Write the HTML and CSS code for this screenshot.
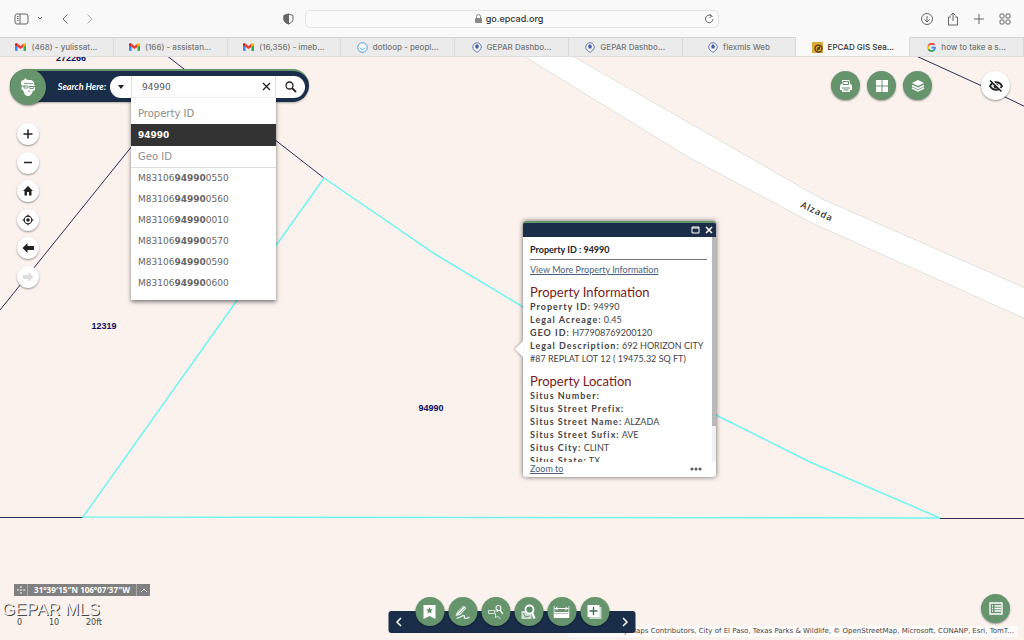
FILE: index.html
```html
<!DOCTYPE html>
<html lang="en">
<head>
    <meta charset="UTF-8">
    <meta name="viewport" content="width=device-width, initial-scale=1.0">
    <title>EPCAD GIS Search</title>
    <link rel="stylesheet" href="styles.css">
</head>
<body>

    <!-- shared icons -->
    <svg class="sprite" aria-hidden="true">
        <symbol id="gmail" viewBox="0 0 22 16">
            <path d="M0 2v12c0 1 1 2 2 2h3V7z" fill="#4285f4"/>
            <path d="M22 2v12c0 1-1 2-2 2h-3V7z" fill="#34a853"/>
            <path d="M5 1v7l6 4 6-4V1l-6 5z" fill="#ea4335"/>
            <path d="M0 3c0-3 3-3 5-2v7L0 4z" fill="#c5221f"/>
            <path d="M22 3c0-3-3-3-5-2v7l5-4z" fill="#fbbc04"/>
        </symbol>
        <symbol id="gepar" viewBox="0 0 20 22">
            <path d="M10 21l-3-3a8.500 8.500 0 1 1 6 0z" fill="#fff" stroke="#4a64ad" stroke-width="1.800"/>
            <path d="M10 4l5 5h-2v4H7V9H5z" fill="#3f5aa8"/>
        </symbol>
    </svg>

    <header class="toolbar">
        <div class="tools tools-left">
            <button class="tool" aria-label="Sidebar"><svg width="15" height="12" viewBox="0 0 15 12"><rect x="1" y="1" width="13" height="10" rx="2"/><path d="M6 1v10M3 3.500h1.500M3 5.500h1.500M3 7.500h1.500"/></svg></button>
            <button class="tool tool-menu" aria-label="Tab groups"><svg width="6" height="5" viewBox="0 0 6 5"><path d="M1 1l2 2 2-2"/></svg></button>
            <button class="tool tool-back" aria-label="Back"><svg width="8" height="12" viewBox="0 0 8 12"><path d="M6.500 1.500L2 6l4.500 4.500"/></svg></button>
            <button class="tool tool-off" aria-label="Forward"><svg width="8" height="12" viewBox="0 0 8 12"><path d="M1.500 1.500L6 6l-4.500 4.500"/></svg></button>
            <button class="tool tool-shield" aria-label="Privacy report"><svg width="11" height="12" viewBox="0 0 11 12"><path d="M5.500 1L10 2.500v4c0 2-2 3.500-4.500 4.500C3 10 1 8.500 1 6.500v-4z"/><path d="M5.500 1v10C3 10 1 8.500 1 6.500v-4z" class="solid"/></svg></button>
        </div>
        <div class="address">
            <span class="address-text"><svg width="7" height="9" viewBox="0 0 7 9"><rect y="4" width="7" height="5" rx="1" fill="#888"/><path d="M1.500 4V2.500a2 2 0 0 1 4 0V4" fill="none" stroke="#888"/></svg>go.epcad.org</span>
            <button class="tool" aria-label="Reload"><svg width="10" height="11" viewBox="0 0 10 11"><path d="M8.500 4A3.800 3.800 0 1 0 9 6M5.500 1l2 2-2 2"/></svg></button>
        </div>
        <div class="tools tools-right">
            <button class="tool" aria-label="Downloads"><svg width="14" height="14" viewBox="0 0 14 14"><circle cx="7" cy="7" r="5.500"/><path d="M7 4v6M4.500 7.500L7 10l2.500-2.500"/></svg></button>
            <button class="tool" aria-label="Share"><svg width="14" height="14" viewBox="0 0 14 14"><path d="M5 5H2.500v8h9V5H9M7 9V1M4.500 3.500L7 1l2.500 2.500"/></svg></button>
            <button class="tool" aria-label="New tab"><svg width="14" height="14" viewBox="0 0 14 14"><path d="M7 2v10M2 7h10"/></svg></button>
            <button class="tool" aria-label="Tab overview"><svg width="14" height="14" viewBox="0 0 14 14"><rect x="2" y="2" width="4" height="4" rx="1"/><rect x="8" y="2" width="4" height="4" rx="1"/><rect x="2" y="8" width="4" height="4" rx="1"/><rect x="8" y="8" width="4" height="4" rx="1"/></svg></button>
        </div>
    </header>

    <nav class="tabs">
        <a class="tab" href="#"><svg width="11" height="8"><use href="#gmail"/></svg>(468) - yulissat...</a>
        <a class="tab" href="#"><svg width="11" height="8"><use href="#gmail"/></svg>(166) - assistan...</a>
        <a class="tab" href="#"><svg width="11" height="8"><use href="#gmail"/></svg>(16,356) - imeb...</a>
        <a class="tab" href="#"><svg width="11" height="11" viewBox="0 0 22 22"><circle cx="11" cy="11" r="9.500" fill="#fff" stroke="#4b9ae0" stroke-width="2"/><path d="M6 11c1 5 9 5 10 0" fill="none" stroke="#4b9ae0" stroke-width="2"/></svg>dotloop - peopl...</a>
        <a class="tab" href="#"><svg width="10" height="11"><use href="#gepar"/></svg>GEPAR Dashbo...</a>
        <a class="tab" href="#"><svg width="10" height="11"><use href="#gepar"/></svg>GEPAR Dashbo...</a>
        <a class="tab" href="#"><svg width="10" height="11"><use href="#gepar"/></svg>flexmls Web</a>
        <a class="tab active" href="#"><svg width="11" height="11" viewBox="0 0 22 22"><path d="M0 0h22v22H0z" fill="#dfa83a"/><circle cx="13" cy="13" r="7" fill="none" stroke="#4c3515" stroke-width="2.500"/><path d="M17 8l-2 7-6 3 2-7z" fill="#4c3515"/></svg>EPCAD GIS Sea...</a>
        <a class="tab" href="#"><svg width="9" height="9" viewBox="0 0 18 18" fill="none" stroke-width="3.500"><path d="M15 4A7 7 0 0 0 3 5.500" stroke="#ea4335"/><path d="M3 5.500a7 7 0 0 0 0 7" stroke="#fbbc04"/><path d="M3 12.500a7 7 0 0 0 10.500 2" stroke="#34a853"/><path d="M13.500 14.500A7 7 0 0 0 16 9H9" stroke="#4285f4"/></svg>how to take a s...</a>
    </nav>

    <main class="map">
        <svg class="parcels" aria-hidden="true">
            <path class="road" d="M522-2L688 100 812 166 1030 264V233L820 141 571-2z"/>
            <path class="boundary" d="M0 253L190 17M166-2L324 121M914-2L982 29 1030 52M0 460.500H83M940 461.500H1030"/>
            <path class="selected" d="M324 121L83 460 940 461 810 405 716 358 523 250 435 197z"/>
            <text class="parcel-id" x="71" y="4">272266</text>
            <text class="parcel-id" x="104" y="272">12319</text>
            <text class="parcel-id" x="431" y="354">94990</text>
            <text class="street" transform="translate(800 150) rotate(25)">Alzada</text>
        </svg>

        <div class="map-top">
            <form class="search">
                <span class="logo"><svg width="18" height="20" viewBox="0 0 18 20"><path d="M3 9C1 6 2 3 5 3L6 1c1 2 4 2 6 2 3 1 4 3 3 5l1 1v4l-2 1c-1 3-3 5-5 5-3 0-4-3-5-6-2 0-2-2-1-4z" fill="#fff"/><path d="M2 9h4M10 9.500h6M5 9v2h4V9zM11 9.500v2h3.500v-2zM5 6.500c3-1 6 1 9 0M9 14l2 .5" fill="none" stroke="#66946d" stroke-width=".9"/></svg></span>
                <label for="search-text">Search Here:</label>
                <div class="search-box">
                    <button type="button" class="search-source" aria-label="Search source"><svg width="6" height="4" viewBox="0 0 6 4"><path d="M0 0h6L3 4z" fill="#222"/></svg></button>
                    <div class="search-field">
                        <input id="search-text" type="text" value="94990">
                        <button type="button" class="clear" aria-label="Clear"><svg width="9" height="9" viewBox="0 0 9 9"><path d="M1 1l7 7M8 1L1 8" stroke="#222" stroke-width="1.300"/></svg></button>
                        <div class="suggestions">
                            <h4>Property ID</h4>
                            <ul>
                                <li><button type="button" class="current"><b>94990</b></button></li>
                            </ul>
                            <h4 class="ruled">Geo ID</h4>
                            <ul>
                                <li><button type="button">M83106<b>94990</b>0550</button></li>
                                <li><button type="button">M83106<b>94990</b>0560</button></li>
                                <li><button type="button">M83106<b>94990</b>0010</button></li>
                                <li><button type="button">M83106<b>94990</b>0570</button></li>
                                <li><button type="button">M83106<b>94990</b>0590</button></li>
                                <li><button type="button">M83106<b>94990</b>0600</button></li>
                            </ul>
                        </div>
                    </div>
                    <button class="go" aria-label="Search"><svg width="12" height="12" viewBox="0 0 12 12" fill="none" stroke="#222"><circle cx="4.500" cy="4.500" r="3.500" stroke-width="1.300"/><path d="M7 7l4 4" stroke-width="1.800"/></svg></button>
                </div>
            </form>

            <div class="map-actions">
                <button class="round" aria-label="Print"><svg width="14" height="14" viewBox="0 0 14 14"><path d="M3 1h7l1 2v2h1l1 2v4h-2v2H3v-2H1V7l1-2h1z" fill="#fff"/><path d="M4 2.500h5.500V5.500H4zM3 9h8M4.500 11h5" fill="none" stroke="#5c8f66"/></svg></button>
                <button class="round" aria-label="Basemap gallery"><svg width="14" height="14" viewBox="0 0 14 14"><path d="M1 1h5.500v5.500H1zM7.500 1H13v5.500H7.500zM1 7.500h5.500V13H1zM7.500 7.500H13V13H7.500z" fill="#fff"/></svg></button>
                <button class="round" aria-label="Layers"><svg width="14" height="14" viewBox="0 0 14 14"><path d="M7 1l6 3-6 3-6-3z" fill="#fff"/><path d="M1 6.500l6 3 6-3M1 9l6 3 6-3" fill="none" stroke="#fff" stroke-width="1.500"/></svg></button>
                <button class="round plain hide-all" aria-label="Hide widgets"><svg width="14" height="12" viewBox="0 0 14 12" fill="none" stroke="#222"><path d="M1 6c3-5 9-5 12 0-3 5-9 5-12 0z" stroke-width="1.800"/><circle cx="7" cy="6" r="2" fill="#222"/><path d="M2 0l11 11" stroke="#fff" stroke-width="2"/><path d="M1 .5l11.500 11" stroke-width="1.500"/></svg></button>
            </div>
        </div>

        <div class="nav-rail">
            <button class="round plain small" aria-label="Zoom in"><svg width="12" height="12" viewBox="0 0 12 12"><path d="M6 1.500v9M1.500 6h9" stroke="#222" stroke-width="1.500"/></svg></button>
            <button class="round plain small" aria-label="Zoom out"><svg width="12" height="12" viewBox="0 0 12 12"><path d="M2 5.500h8" stroke="#222" stroke-width="1.500"/></svg></button>
            <button class="round plain small" aria-label="Home"><svg width="12" height="12" viewBox="0 0 12 12"><path d="M6 1l5 5H9.500v4.500h-2.500V7H5v3.500H2.500V6H1z" fill="#222"/></svg></button>
            <button class="round plain small" aria-label="My location"><svg width="12" height="12" viewBox="0 0 12 12"><circle cx="6" cy="6" r="3.800" fill="none" stroke="#222" stroke-width="1.200"/><circle cx="6" cy="6" r="1.800" fill="#222"/><path d="M6 .5v2M6 9.500v2M.5 6h2M9.500 6h2" stroke="#222"/></svg></button>
            <button class="round plain small" aria-label="Previous extent"><svg width="12" height="12" viewBox="0 0 12 12"><path d="M.5 6l5-5v3H12v4H5.500v3z" fill="#222"/></svg></button>
            <button class="round plain small" aria-label="Next extent" disabled><svg width="12" height="12" viewBox="0 0 12 12"><path d="M11.500 6l-5-5v3H1v4h5.500v3z" fill="#ddd"/></svg></button>
        </div>

        <section class="popup">
            <div class="popup-title">
                <button aria-label="Maximize"><svg width="9" height="8" viewBox="0 0 9 8"><path d="M1 1h7v6H1zM1 2h7" fill="none" stroke="#fff"/></svg></button>
                <button aria-label="Close"><svg width="8" height="8" viewBox="0 0 8 8"><path d="M1 1l6 6M7 1L1 7" stroke="#fff" stroke-width="1.600"/></svg></button>
            </div>
            <div class="popup-body">
                <div class="popup-text">
                    <h2>Property ID : 94990</h2>
                    <a href="#">View More Property Information</a>
                    <h3>Property Information</h3>
                    <p><b>Property ID:</b> 94990</p>
                    <p><b>Legal Acreage:</b> 0.45</p>
                    <p><b>GEO ID:</b> H77908769200120</p>
                    <p><b>Legal Description:</b> 692 HORIZON CITY #87 REPLAT LOT 12 ( 19475.32 SQ FT)</p>
                    <h3>Property Location</h3>
                    <p><b>Situs Number:</b></p>
                    <p><b>Situs Street Prefix:</b></p>
                    <p><b>Situs Street Name:</b> ALZADA</p>
                    <p><b>Situs Street Sufix:</b> AVE</p>
                    <p><b>Situs City:</b> CLINT</p>
                    <p><b>Situs State:</b> TX</p>
                </div>
                <div class="scroll-track"><div class="scroll-thumb"></div></div>
            </div>
            <div class="popup-foot">
                <a href="#">Zoom to</a>
                <button aria-label="More"><svg width="12" height="4" viewBox="0 0 12 4" fill="#555"><circle cx="2" cy="2" r="1.500"/><circle cx="6" cy="2" r="1.500"/><circle cx="10" cy="2" r="1.500"/></svg></button>
            </div>
        </section>

        <div class="credits">Esri Community Maps Contributors, City of El Paso, Texas Parks &amp; Wildlife, © OpenStreetMap, Microsoft, CONANP, Esri, TomT...</div>

        <div class="map-status">
            <div class="coords">
                <button aria-label="Pick coordinate"><svg width="10" height="10" viewBox="0 0 10 10"><path d="M5 1v2M5 7v2M1 5h2M7 5h2M4 5h2" stroke="#fff"/></svg></button>
                <span>31°39′15″N 106°07′37″W</span>
                <button aria-label="Coordinate options"><svg width="8" height="6" viewBox="0 0 8 6"><path d="M1 5l3-3 3 3" fill="none" stroke="#fff"/></svg></button>
            </div>
            <div class="watermark">GEPAR MLS</div>
            <div class="scale"><span>0</span><span>10</span><span>20ft</span></div>
        </div>

        <div class="dock">
            <button class="arrow" aria-label="Previous"><svg width="7" height="10" viewBox="0 0 7 10"><path d="M5.500 1l-4 4 4 4"/></svg></button>
            <div class="dock-tools">
                <button class="round" aria-label="Bookmarks"><svg width="16" height="16" viewBox="0 0 16 16"><path d="M2 1h12v14l-6-3-6 3z" fill="#fff"/><path d="M8 3l1 2.300 2.500.2-2 1.600.7 2.400L8 8.200 5.800 9.500l.7-2.400-2-1.600 2.500-.2z" fill="#5c8f66"/></svg></button>
                <button class="round" aria-label="Draw"><svg width="16" height="16" viewBox="0 0 16 16"><path d="M1 12l1.500-4L9 1.500 12 4l-6.500 7z" fill="#eef5ee"/><path d="M3 8.500L9.500 2M4.500 10L11 3.500" stroke="#5c8f66" stroke-width=".6"/><path d="M2 14c3 1 6-4 8-2-1 3 2 3 5 1" fill="none" stroke="#eef5ee" stroke-width="1.200"/></svg></button>
                <button class="round" aria-label="Infographic"><svg width="16" height="16" viewBox="0 0 16 16" fill="none" stroke="#eef5ee"><path d="M1 6.500h6v3H1zM7 7h3M10 5v3M8 9v5l2-2 3 3" stroke-width=".8"/><circle cx="11" cy="4" r="2.500" stroke-width="1.200"/><path d="M12.500 6l3 4" stroke-width="1.500"/></svg></button>
                <button class="round" aria-label="Query"><svg width="16" height="16" viewBox="0 0 16 16"><path d="M1 7h5l5 4v4H1z" fill="#cfe0d1"/><path d="M3 9l2 4 4-1" fill="none" stroke="#5c8f66"/><circle cx="9" cy="5.500" r="4" fill="#5c8f66" stroke="#fff" stroke-width="1.800"/><path d="M11.500 8.500l2.500 6" stroke="#fff" stroke-width="2.200"/></svg></button>
                <button class="round" aria-label="Measure"><svg width="16" height="16" viewBox="0 0 16 16"><path d="M.5 2v6M15.500 2v6M1 4.500h14M4 3L2 4.500 4 6M12 3l2 1.500L12 6" fill="none" stroke="#fff"/><path d="M0 8h16v6H0z" fill="#fff"/><path d="M1 9.500h14" stroke="#5c8f66" stroke-dasharray="1 1"/></svg></button>
                <button class="round" aria-label="Add data"><svg width="16" height="16" viewBox="0 0 16 16"><path d="M4 3h11v12H3v-2z" fill="#c5dac8"/><path d="M1 1h12v12H1z" fill="#fff"/><path d="M7 3v8M3 7h8" stroke="#3f6f4b" stroke-width="1.400"/></svg></button>
            </div>
            <button class="arrow" aria-label="Next"><svg width="7" height="10" viewBox="0 0 7 10"><path d="M1.500 1l4 4-4 4"/></svg></button>
        </div>

        <button class="round attributes" aria-label="Attribute table"><svg width="14" height="13" viewBox="0 0 14 13"><path d="M1 1h12v11H1zM3 4h1M3 6.500h1M3 9h1M5.500 4H12M5.500 6.500H12M5.500 9H12" fill="none" stroke="#fff" stroke-width="1.400"/></svg></button>
    </main>

</body>
</html>
```
FILE: styles.css
```css
* {
    box-sizing: border-box;
}

body {
    margin: 0;
    height: 100vh;
    display: flex;
    flex-direction: column;
    overflow: hidden;
    font-family: "DejaVu Sans", Verdana, sans-serif;
    font-size: 9px;
    color: #444;
}

button {
    display: flex;
    align-items: center;
    justify-content: center;
    padding: 0;
    border: 0;
    background: none;
    font: inherit;
    color: inherit;
}

.sprite {
    position: absolute;
    width: 0;
    height: 0;
}

/* browser bar */
.toolbar {
    display: grid;
    grid-template-columns: 1fr 40.5% 1fr;
    align-items: center;
    height: 37px;
    background: #f9f9f9;
    font-family: Inter, sans-serif;
}

.tools {
    display: flex;
    align-items: center;
}

.tools-left {
    padding-left: 14px;
    padding-right: 11px;
}

.tools-right {
    justify-content: flex-end;
    gap: 12px;
    padding-right: 12px;
}

.tool svg {
    fill: none;
    stroke: #666;
}

.tool .solid {
    fill: #666;
}

.tool-menu {
    margin: 0 18px 0 8px;
}

.tool-back {
    margin-right: 17px;
}

.tool-off {
    opacity: 0.5;
}

.tool-shield {
    margin-left: auto;
}

.address {
    display: flex;
    align-items: center;
    height: 18px;
    padding: 0 4px;
    border: 1px solid #e2e2e2;
    border-radius: 5px;
    background: #fbfbfb;
}

.address-text {
    flex: 1;
    display: flex;
    align-items: center;
    justify-content: center;
    gap: 4px;
    padding-left: 4px;
    font-size: 9px;
    font-weight: 500;
    color: #333;
}

.tabs {
    display: grid;
    grid-template-columns: repeat(9, 1fr);
    height: 20px;
    background: #ebebeb;
    border-bottom: 1px solid #ddd;
    font-family: Inter, sans-serif;
    font-size: 8px;
    font-weight: 500;
}

.tab {
    display: flex;
    align-items: center;
    justify-content: center;
    gap: 5px;
    border-top: 1px solid #d2d2d2;
    border-right: 1px solid #d9d9d9;
    color: #777;
    text-decoration: none;
    white-space: nowrap;
}

.tab.active {
    background: #f9f9f9;
    border-top-color: #f9f9f9;
    color: #333;
}

/* map */
.map {
    position: relative;
    flex: 1;
    background: #fbf2ed;
    overflow: hidden;
}

.parcels {
    position: absolute;
    width: 100%;
    height: 100%;
}

.road {
    fill: #fff;
    stroke: #e3e0dc;
}

.boundary {
    fill: none;
    stroke: #2b2d55;
}

.selected {
    fill: none;
    stroke: #70f5ee;
    stroke-width: 1.500;
}

.parcel-id {
    font: bold 9px "Liberation Sans", Arial, sans-serif;
    fill: #0d0d60;
    text-anchor: middle;
}

.street {
    font: 500 9px "Noto Sans", sans-serif;
    letter-spacing: 1px;
    fill: #222;
}

.map-top {
    position: relative;
    z-index: 2;
    display: flex;
    justify-content: space-between;
    align-items: flex-start;
    padding: 12px 14px 0 10px;
}

.round {
    width: 29px;
    height: 29px;
    flex: none;
    border-radius: 50%;
    background: #66946d;
    box-shadow: 0 1px 2px rgba(0, 0, 0, 0.4);
}

.round.plain {
    background: #fff;
}

.round.small {
    width: 22px;
    height: 22px;
}

.search {
    display: flex;
    align-items: center;
    width: 299px;
    height: 33px;
    padding-right: 4px;
    border-top: 2px solid #66946d;
    border-radius: 18px;
    background: #1a2e4a;
    box-shadow: 0 1px 2px rgba(0, 0, 0, 0.3);
}

.logo {
    display: flex;
    align-items: center;
    justify-content: center;
    width: 36px;
    height: 36px;
    border-radius: 50%;
    background: #66946d;
    box-shadow: 0 1px 2px rgba(0, 0, 0, 0.4);
}

.search label {
    flex: 1;
    text-align: right;
    padding-right: 4px;
    font: italic bold 9px Lato, sans-serif;
    color: #fff;
}

.search-box {
    display: flex;
    width: 195px;
    height: 22px;
    border-radius: 11px;
    background: #fff;
}

.search-source {
    flex: none;
    width: 21px;
}

.search-field {
    position: relative;
    flex: 1;
    display: flex;
    min-width: 0;
    border: solid #e2e2e2;
    border-width: 0 1px;
}

.search-field input {
    flex: 1;
    min-width: 0;
    padding: 0 0 0 10px;
    border: 0;
    outline: 0;
    background: none;
    font: inherit;
    color: #555;
}

.clear {
    width: 18px;
}

.go {
    flex: none;
    width: 29px;
}

.suggestions {
    position: absolute;
    top: 22px;
    left: -1px;
    right: -1px;
    padding: 5px 0 6px;
    background: #fff;
    box-shadow: 0 2px 4px rgba(0, 0, 0, 0.5);
    line-height: 21px;
    color: #666;
}

.suggestions h4 {
    margin: 0;
    padding-left: 7px;
    font-size: 10px;
    font-weight: normal;
    color: #8c8c8c;
}

.suggestions .ruled {
    border-bottom: 1px solid #ddd;
}

.suggestions ul {
    margin: 0;
    padding: 0;
    list-style: none;
}

.suggestions button {
    width: 100%;
    justify-content: flex-start;
    padding-left: 7px;
    line-height: 21px;
}

.suggestions .current {
    line-height: 22px;
    background: #333;
    color: #fff;
}

.map-actions {
    display: flex;
    gap: 7px;
    padding-top: 2px;
}

.hide-all {
    margin-left: 42px;
}

.nav-rail {
    position: relative;
    display: flex;
    flex-direction: column;
    justify-content: space-between;
    width: 22px;
    height: 165px;
    margin: 21px 0 0 17px;
}

/* feature popup */
.popup {
    position: absolute;
    left: 523px;
    top: 164px;
    display: flex;
    flex-direction: column;
    width: 193px;
    height: 256px;
    border-radius: 3px;
    background: #fff;
    box-shadow: 0 0 5px rgba(0, 0, 0, 0.6);
    font-family: Lato, sans-serif;
    line-height: 13px;
}

.popup::before {
    content: "";
    position: absolute;
    left: -8px;
    top: 120px;
    border: solid transparent;
    border-width: 8px 8px 8px 0;
    border-right-color: #fff;
    filter: drop-shadow(-1px 0 1px rgba(0, 0, 0, 0.3));
}

.popup-title {
    display: flex;
    justify-content: flex-end;
    gap: 5px;
    height: 16px;
    padding-right: 3px;
    border-top: 2px solid #66946d;
    border-radius: 3px 3px 0 0;
    background: #1a2e4a;
}

.popup-body {
    flex: 1;
    display: flex;
    min-height: 0;
}

.popup-text {
    flex: 1;
    padding: 6px 5px 0 7px;
    overflow: hidden;
}

.popup-text h2 {
    margin: 0 0 3px;
    padding-bottom: 3px;
    border-bottom: 1px solid #777;
    font-size: 9px;
    color: #222;
}

.popup a {
    color: #47617f;
}

.popup-text h3 {
    margin: 8px 0 0;
    font-size: 13px;
    font-weight: normal;
    line-height: 16px;
    color: #7a1a1a;
}

.popup-text p {
    margin: 0;
}

.popup-text p b {
    letter-spacing: 1px;
}

.scroll-track {
    width: 4px;
    background: #f0f0f0;
}

.scroll-thumb {
    height: 84%;
    background: #b9b9b9;
}

.popup-foot {
    display: flex;
    justify-content: space-between;
    align-items: center;
    height: 15px;
    padding: 0 14px 2px 7px;
}

/* bottom of the map */
.credits {
    position: absolute;
    right: 6px;
    bottom: 3px;
    padding: 0 4px;
    background: rgba(255, 255, 255, 0.7);
    font-size: 7px;
    line-height: 11px;
    white-space: nowrap;
}

.map-status {
    position: absolute;
    left: 2px;
    bottom: 13px;
}

.coords {
    display: flex;
    align-items: center;
    width: 136px;
    height: 12px;
    margin-left: 12px;
    background: #808080;
    font: bold 8px "Noto Sans", sans-serif;
    color: #fff;
}

.coords span {
    flex: 1;
    border: solid #aaa;
    border-width: 0 1px;
    line-height: 12px;
    text-align: center;
    white-space: nowrap;
}

.coords button {
    width: 13px;
}

.watermark {
    margin-top: 5px;
    font: 17px/18px "Liberation Sans", Arial, sans-serif;
    color: #fbf2ed;
    text-shadow: 1px 1px 0 #444;
}

.scale {
    display: flex;
    justify-content: space-between;
    width: 85px;
    height: 8px;
    margin-left: 15px;
    font-size: 8px;
    line-height: 8px;
}

.dock {
    position: absolute;
    left: 50%;
    bottom: 7px;
    display: flex;
    align-items: center;
    justify-content: space-between;
    width: 247px;
    height: 22px;
    padding: 0 7px;
    border-radius: 3px;
    background: #1a2e4a;
    transform: translateX(-50%);
}

.dock-tools {
    display: flex;
    gap: 4px;
    margin-top: -21px;
}

.arrow svg {
    fill: none;
    stroke: #fff;
    stroke-width: 1.500;
}

.attributes {
    position: absolute;
    right: 14px;
    bottom: 17px;
}
```
